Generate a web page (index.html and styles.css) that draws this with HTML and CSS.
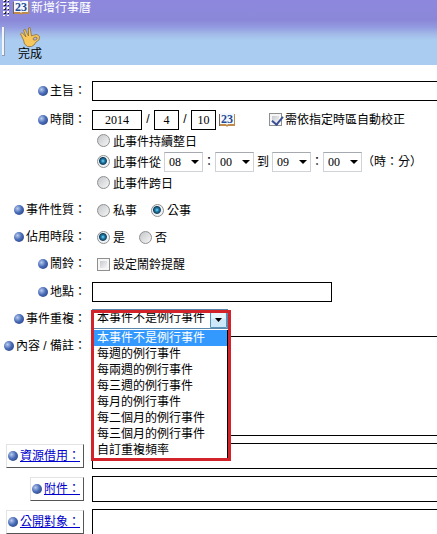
FILE: index.html
```html
<!DOCTYPE html>
<html lang="zh-Hant">
<head>
    <meta charset="UTF-8">
    <meta name="viewport" content="width=device-width, initial-scale=1.0">
    <title>新增行事曆</title>
    <link rel="stylesheet" href="styles.css">
</head>
<body>
    <!-- shared calendar icon -->
    <svg class="defs" width="0" height="0" aria-hidden="true">
        <symbol id="calendar" viewBox="0 0 16 15">
            <path d="M0 2h16v12H9l-1 1-1-1H0z" fill="#c08a4a"/>
            <path d="M0 2h1v12H0z" fill="#6f665f"/>
            <path d="M1 1h6l1 1 1-1h6v11H9l-1 1-1-1H1z" fill="#f4f8fd"/>
            <text x="8" y="11" text-anchor="middle" class="cal-text">23</text>
        </symbol>
    </svg>

    <header class="header">
        <div class="titlebar">
            <span class="grip"></span>
            <svg class="cal" width="16" height="15"><use href="#calendar"/></svg>
            <h1>新增行事曆</h1>
        </div>
        <div class="toolbar">
            <span class="handle"></span>
            <button type="button" class="done">
                <svg width="20" height="20" viewBox="0 0 20 20" aria-hidden="true">
                    <path d="M.5 7l1.500-1.500L6 10 3.500 3 5 2l3.500 7L8.500 1 10 .5l1.500 8.500L14 8l3-.5 2.500 2-.5 3.500-3 2-2 3-2.500 1.500h-4L4.500 17l-1-4z" fill="#f7c75c" stroke="#8d713b" stroke-width=".8"/>
                    <path d="M13 11.500l2-1.500 2 .5v1.500l-1.500 1-2 0z" fill="#b3b6dc" stroke="#8d713b" stroke-width=".8"/>
                </svg>
                <span>完成</span>
            </button>
        </div>
    </header>

    <form class="form">
        <div class="row subject">
            <label class="label" for="subject"><i class="dot"></i>主旨：</label>
            <input class="box wide" type="text" id="subject">
        </div>

        <div class="row">
            <label class="label" for="year"><i class="dot"></i>時間：</label>
            <div class="field">
                <div class="date">
                    <input class="box year" type="text" id="year" value="2014">
                    <span class="slash">/</span>
                    <input class="box day" type="text" value="4" aria-label="月">
                    <span class="slash">/</span>
                    <input class="box day" type="text" value="10" aria-label="日">
                    <button type="button" class="pick" aria-label="選擇日期"><svg width="16" height="15"><use href="#calendar"/></svg></button>
                    <label class="option zone"><input type="checkbox" checked>需依指定時區自動校正</label>
                </div>
                <div class="line">
                    <label class="option"><input type="radio" name="span">此事件持續整日</label>
                </div>
                <div class="line">
                    <label class="option"><input type="radio" name="span" checked>此事件從</label>
                    <select class="time first" aria-label="開始時"><option>08</option></select>：<select class="time" aria-label="開始分"><option>00</option></select>
                    <span class="to">到</span>
                    <select class="time" aria-label="結束時"><option>09</option></select>：<select class="time" aria-label="結束分"><option>00</option></select>（時：分）
                </div>
                <div class="line">
                    <label class="option"><input type="radio" name="span">此事件跨日</label>
                </div>
            </div>
        </div>

        <div class="row">
            <span class="label" id="kind"><i class="dot"></i>事件性質：</span>
            <div class="line" role="radiogroup" aria-labelledby="kind">
                <label class="option"><input type="radio" name="kind">私事</label>
                <label class="option"><input type="radio" name="kind" checked>公事</label>
            </div>
        </div>

        <div class="row">
            <span class="label" id="busy"><i class="dot"></i>佔用時段：</span>
            <div class="line" role="radiogroup" aria-labelledby="busy">
                <label class="option"><input type="radio" name="busy" checked>是</label>
                <label class="option"><input type="radio" name="busy">否</label>
            </div>
        </div>

        <div class="row alarm">
            <span class="label"><i class="dot"></i>鬧鈴：</span>
            <div class="line">
                <label class="option"><input type="checkbox">設定鬧鈴提醒</label>
            </div>
        </div>

        <div class="row">
            <label class="label" for="place"><i class="dot"></i>地點：</label>
            <input class="box place" type="text" id="place">
        </div>

        <div class="row">
            <label class="label" for="repeat"><i class="dot"></i>事件重複：</label>
            <div class="combo">
                <select id="repeat" class="repeat"><option>本事件不是例行事件</option></select>
                <ul class="menu" role="listbox" aria-label="事件重複">
                    <li class="active" role="option" aria-selected="true">本事件不是例行事件</li>
                    <li role="option">每週的例行事件</li>
                    <li role="option">每兩週的例行事件</li>
                    <li role="option">每三週的例行事件</li>
                    <li role="option">每月的例行事件</li>
                    <li role="option">每二個月的例行事件</li>
                    <li role="option">每三個月的例行事件</li>
                    <li role="option">自訂重複頻率</li>
                </ul>
                <span class="mark"></span>
            </div>
        </div>

        <div class="row">
            <label class="label" for="content"><i class="dot"></i>內容 / 備註：</label>
            <textarea class="box wide content" id="content"></textarea>
        </div>

        <div class="row">
            <div class="label tall"><a class="btn" href="#resource"><i class="dot"></i>資源借用：</a></div>
            <div class="box wide list" id="resource"></div>
        </div>

        <div class="row">
            <div class="label tall"><a class="btn" href="#files"><i class="dot"></i>附件：</a></div>
            <div class="box wide list" id="files"></div>
        </div>

        <div class="row">
            <div class="label tall"><a class="btn" href="#target"><i class="dot"></i>公開對象：</a></div>
            <div class="box wide list target" id="target"></div>
        </div>
    </form>
</body>
</html>
```
FILE: styles.css
```css
* {
    box-sizing: border-box;
}
body {
    margin: 0;
    background-color: #fff;
    color: #000;
    font-family: 'Liberation Sans', 'Noto Sans CJK TC', sans-serif;
    font-size: 12px;
    line-height: 16px;
    overflow-x: hidden;
}
input, select, textarea, button {
    font: inherit;
    color: inherit;
    margin: 0;
    border-radius: 0;
}
.defs {
    position: absolute;
}
.cal-text {
    fill: #1f4a94;
    font-family: 'Liberation Serif', serif;
    font-size: 12px;
    font-weight: bold;
}

/* header */
.header {
    height: 65px;
    background: linear-gradient(#8d88dd 0, #8b87d8 20px, #929ae0 27px, #a2b9e8 34px, #a9ccf0 40px);
}
.titlebar {
    display: flex;
    align-items: center;
    height: 15px;
    padding-left: 3px;
}
.titlebar h1 {
    margin: 0 0 0 2px;
    color: #fff;
    font-size: 12px;
    font-weight: normal;
}
.grip {
    width: 6px;
    height: 17px;
    margin-right: 4px;
    background:
        linear-gradient(#fff, #fff) 0 0 / 1px 1px,
        radial-gradient(circle at 1px 1px, #fff 1px, transparent 1px) 0 0 / 4px 4px,
        radial-gradient(circle at 1px 1px, #222 1px, transparent 1px) 1px 1px / 4px 4px;
    background-repeat: no-repeat, repeat, repeat;
}
.toolbar {
    display: flex;
    padding: 12px 2px 0;
}
.handle {
    width: 3px;
    height: 29px;
    background-color: #f4f6fb;
    border-right: 1px solid #8f9cb8;
    border-bottom: 1px solid #8f9cb8;
}
.done {
    display: flex;
    flex-direction: column;
    align-items: center;
    margin-left: 13px;
    padding: 0;
    border: 0;
    background: none;
    line-height: 14px;
}

/* form */
.form {
    display: flex;
    flex-direction: column;
    gap: 7px;
    padding-top: 16px;
}
.row {
    display: grid;
    grid-template-columns: 86px 1fr;
    column-gap: 6px;
}
.subject {
    margin-bottom: 2px;
}
.alarm {
    margin-bottom: 1px;
}
.label {
    display: flex;
    align-items: center;
    justify-content: flex-end;
    height: 19px;
    white-space: pre;
}
.dot {
    width: 10px;
    height: 10px;
    margin-right: 2px;
    border-radius: 50%;
    background: radial-gradient(circle at 35% 35%, #b9cbee 0, #4a6db8 45%, #1d3573 100%);
}
.box {
    height: 20px;
    padding: 0 2px;
    border: 1px solid #000;
    background-color: #fff;
}
.wide {
    width: 100%;
    border-right: 0;
}
.place {
    width: 240px;
    max-width: 100%;
}
.content {
    display: block;
    height: 100px;
    resize: none;
}
.list {
    height: 26px;
}
.target {
    height: 40px;
}

/* date and time */
.date {
    display: flex;
    height: 20px;
}
.year, .day {
    width: 50px;
    padding: 0;
    font-family: 'Liberation Serif', serif;
    text-align: center;
}
.day {
    width: 25px;
}
.slash {
    width: 12px;
    line-height: 18px;
    text-align: center;
}
.pick {
    height: 15px;
    margin: 2px 34px 0 3px;
    padding: 0;
    border: 0;
    background: none;
}
.pick svg {
    display: block;
}
.line {
    display: flex;
    align-items: center;
    height: 21px;
    white-space: nowrap;
}
.row > .line {
    height: 20px;
}
.option {
    display: flex;
    align-items: center;
    gap: 3px;
    margin-left: 5px;
    padding-top: 2px;
}
.option + .option {
    margin-left: 14px;
}
.zone {
    height: 18px;
    margin-left: 0;
}

/* radio and checkbox */
input[type="radio"], input[type="checkbox"] {
    appearance: none;
    flex: none;
    width: 13px;
    height: 13px;
    margin-bottom: 2px;
    border: 1px solid #8e8f8f;
    background: linear-gradient(135deg, #c6c9ce, #f6f6f6) content-box, #f6f6f6;
    padding: 2px;
}
input[type="radio"] {
    border-radius: 50%;
    background: linear-gradient(135deg, #c4c7cb, #f6f6f6);
}
input[type="radio"]:checked {
    background: radial-gradient(circle closest-side at 45% 45%, #7fdcf5 0, #1f7fae 35%, #12405f 70%, #f0f2f4 90%);
}
input[type="checkbox"]:checked::after {
    content: '';
    display: block;
    width: 5px;
    height: 9px;
    margin: -2px 0 0 2px;
    border: solid #3a4f94;
    border-width: 0 2px 2px 0;
    transform: rotate(40deg);
}

/* drop-downs */
select {
    appearance: none;
}
.time {
    width: 39px;
    height: 20px;
    padding: 0 4px;
    border: 1px solid #cfd3d8;
    border-top-color: #a5a9b0;
    background: #fff url("data:image/svg+xml,%3Csvg xmlns='http://www.w3.org/2000/svg' width='8' height='4'%3E%3Cpath d='M0 0h8L4 4z'/%3E%3C/svg%3E") no-repeat right 3px center;
    font-family: 'Liberation Serif', serif;
}
.first {
    margin-left: 3px;
}
.to {
    margin: 0 3px;
}
.combo {
    position: relative;
    width: 136px;
}
.repeat {
    display: block;
    width: 100%;
    height: 20px;
    padding: 0 0 2px 4px;
    border: 1px solid #5a87ab;
    background:
        url("data:image/svg+xml,%3Csvg xmlns='http://www.w3.org/2000/svg' width='17' height='18'%3E%3Cpath d='M.5.5h16v17H.5z' fill='%23cde8f8' stroke='%235a93b8'/%3E%3Cpath d='M1.500 1.500h14v7h-14z' fill='%23e8f5fc'/%3E%3Cpath d='M5 8h7l-3.500 4z'/%3E%3C/svg%3E") no-repeat right 0 top 0,
        #fff;
}
.menu {
    position: absolute;
    top: 21px;
    left: 0;
    z-index: 1;
    width: 100%;
    margin: 0;
    padding: 0;
    border: solid #000;
    border-width: 0 1px 0 0;
    background-color: #fff;
    list-style: none;
}
.menu li {
    padding-left: 5px;
    white-space: nowrap;
}
.menu .active {
    background-color: #3399ff;
    color: #fff;
}
.mark {
    position: absolute;
    top: 1px;
    left: -1px;
    z-index: 2;
    width: 140px;
    height: 151px;
    border: 3px solid #d2232a;
    pointer-events: none;
}

/* link buttons */
.tall {
    height: 26px;
}
.btn {
    display: flex;
    align-items: center;
    height: 24px;
    margin-right: 2px;
    padding: 0 3px 0 1px;
    border: 1px solid #e3e3e3;
    border-right-color: #555;
    border-bottom-color: #555;
    color: #0000cc;
    text-decoration: underline;
}
```
